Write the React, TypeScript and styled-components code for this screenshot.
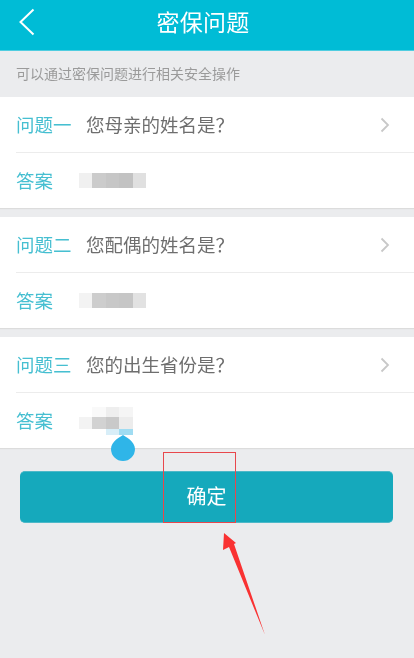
import React from 'react';
import styled, { createGlobalStyle } from 'styled-components';

const GlobalStyle = createGlobalStyle`
  html, body { margin: 0; padding: 0; background: #ebecee; }
  body { font-family: "Noto Sans CJK SC", "Liberation Sans", sans-serif; }
`;

type MosaicLineData = {
  height: number;
  cells: string[];
};

type Question = {
  label: string;
  text: string;
  mosaic: MosaicLineData[];
};

const questions: Question[] = [
  {
    label: '问题一',
    text: '您母亲的姓名是？',
    mosaic: [{ height: 15, cells: ['#f0f0f0', '#cbcbcb', '#c6c6c6', '#c2c2c2', '#e0e0e0'] }],
  },
  {
    label: '问题二',
    text: '您配偶的姓名是？',
    mosaic: [{ height: 15, cells: ['#f3f3f3', '#cdcdcd', '#c8c8c8', '#c6c6c6', '#e2e2e2'] }],
  },
  {
    label: '问题三',
    text: '您的出生省份是？',
    mosaic: [
      { height: 10, cells: ['#ffffff', '#f9f9f9', '#eeeeee', '#f5f5f5'] },
      { height: 12, cells: ['#f3f3f3', '#d2d2d2', '#c9c9c9', '#ececec'] },
      { height: 6, cells: ['#ffffff', '#ffffff', '#d8eef8', '#a0dcf2'] },
    ],
  },
];

export default function App() {
  return (
    <Page>
      <GlobalStyle />
      <Header>
        <BackButton>
          <svg width="20" height="28" viewBox="0 0 20 28" fill="none">
            <path d="M16.5 1.500 L3.500 14 L16.5 26.5" stroke="#fff" strokeWidth="2" />
          </svg>
        </BackButton>
        <Title>密保问题</Title>
      </Header>
      <Hint>可以通过密保问题进行相关安全操作</Hint>
      <Cards>
        {questions.map((q) => (
          <Card key={q.label}>
            <QuestionRow>
              <Label>{q.label}</Label>
              <QuestionText>{q.text}</QuestionText>
              <Chevron width="10" height="16" viewBox="0 0 10 16" fill="none">
                <path d="M1.500 1.500 L8 8 L1.500 14.5" stroke="#c8c8c8" strokeWidth="1.8" />
              </Chevron>
            </QuestionRow>
            <AnswerRow>
              <AnswerLabel>答案</AnswerLabel>
              <Mosaic>
                {q.mosaic.map((line, i) => (
                  <MosaicLine key={i} $height={line.height}>
                    {line.cells.map((c, j) => (
                      <MosaicCell key={j} $color={c} />
                    ))}
                  </MosaicLine>
                ))}
              </Mosaic>
            </AnswerRow>
          </Card>
        ))}
      </Cards>
      <Confirm>确定</Confirm>

      <CursorHandle width="24" height="26" viewBox="0 0 24 26">
        <path d="M12 0 C14 1.500 24 6 24 14 A12 12 0 0 1 0 14 C0 6 10 1.500 12 0 Z" fill="#2fb5e8" />
      </CursorHandle>
      <Highlight />
      <Arrow width="50" height="106" viewBox="0 0 50 106" fill="none">
        <path d="M2 1 L14 11 L12 12 L43 103 L7 15 L1 18 Z" fill="#f93232" />
      </Arrow>
    </Page>
  );
}

const Page = styled.div`
  position: relative;
  width: 414px;
  height: 658px;
  overflow: hidden;
  background: #ebecee;
  filter: blur(0.4px);
`;

const Header = styled.header`
  position: relative;
  display: flex;
  align-items: center;
  justify-content: center;
  height: 51px;
  background: #00bcd6;
  border-bottom: 1px solid #4fcde0;
  box-sizing: border-box;
`;

const BackButton = styled.div`
  position: absolute;
  left: 17px;
  top: 8px;
  line-height: 0;
`;

const Title = styled.h1`
  margin: 0 8px 8px 0;
  font-size: 23px;
  font-weight: 400;
  color: #ffffff;
  letter-spacing: 0.2px;
`;

const Hint = styled.div`
  display: flex;
  align-items: center;
  height: 46px;
  padding: 0 0 2px 16px;
  box-sizing: border-box;
  font-size: 14px;
  color: #9a9a9a;
`;

const Cards = styled.div`
  display: flex;
  flex-direction: column;
  gap: 9px;
`;

const Card = styled.section`
  background: #ffffff;
  height: 111px;
  box-shadow: 0 1px 1px #dcdcdc;
`;

const QuestionRow = styled.div`
  display: flex;
  align-items: center;
  height: 56px;
  margin-left: 16px;
  padding-right: 24px;
  border-bottom: 1px solid #ececec;
  box-sizing: border-box;
`;

const Label = styled.span`
  width: 70px;
  margin-top: -2px;
  font-size: 18.500px;
  color: #46bfd1;
  white-space: nowrap;
`;

const QuestionText = styled.span`
  flex: 1;
  margin-top: -2px;
  font-size: 18.500px;
  color: #6e6e6e;
  white-space: nowrap;
`;

const Chevron = styled.svg`
  margin-top: 1px;
`;

const AnswerRow = styled.div`
  display: flex;
  align-items: center;
  height: 55px;
  padding-left: 16px;
`;

const AnswerLabel = styled(Label)`
  width: 63px;
  margin-top: -1px;
`;

const Mosaic = styled.div`
  display: flex;
  flex-direction: column;
`;

const MosaicLine = styled.div<{ $height: number }>`
  display: flex;
  height: ${(p) => p.$height}px;
`;

const MosaicCell = styled.i<{ $color: string }>`
  display: block;
  width: 13.4px;
  background: ${(p) => p.$color};
`;

const Confirm = styled.button`
  display: block;
  width: 373px;
  height: 52px;
  margin: 23px 0 0 20px;
  padding: 0 0 3px;
  border: none;
  border-top: 1px solid #4db8c8;
  border-bottom: 1px solid #4db8c8;
  border-radius: 5px;
  background: #15a9bc;
  color: #ffffff;
  font-family: inherit;
  font-size: 20px;
`;

const CursorHandle = styled.svg`
  position: absolute;
  left: 111px;
  top: 435px;
`;

const Highlight = styled.div`
  position: absolute;
  left: 163px;
  top: 452px;
  width: 73px;
  height: 71px;
  box-sizing: border-box;
  border: 1px solid #e8474c;
`;

const Arrow = styled.svg`
  position: absolute;
  left: 222px;
  top: 532px;
`;
